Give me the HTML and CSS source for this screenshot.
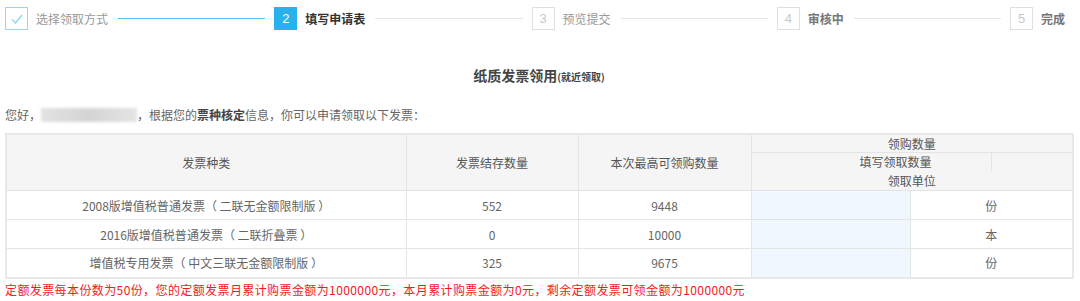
FILE: index.html
```html
<!DOCTYPE html>
<html lang="zh-CN">
<head>
    <meta charset="UTF-8">
    <meta name="viewport" content="width=device-width, initial-scale=1.0">
    <title>纸质发票领用</title>
    <link rel="stylesheet" href="styles.css">
</head>
<body>
    <div class="page">
        <div class="steps">
            <div class="step done">
                <span class="step-box">
                    <svg width="14" height="14" viewBox="0 0 14 14"><path d="M2 7.5 L5.5 11 L12 3" fill="none" stroke="#8fd0f2" stroke-width="1.3"/></svg>
                </span>
                <span class="step-text">选择领取方式</span>
            </div>
            <div class="step-line active"></div>
            <div class="step current">
                <span class="step-box">2</span>
                <span class="step-text">填写申请表</span>
            </div>
            <div class="step-line"></div>
            <div class="step">
                <span class="step-box">3</span>
                <span class="step-text">预览提交</span>
            </div>
            <div class="step-line"></div>
            <div class="step strong">
                <span class="step-box">4</span>
                <span class="step-text">审核中</span>
            </div>
            <div class="step-line"></div>
            <div class="step strong">
                <span class="step-box">5</span>
                <span class="step-text">完成</span>
            </div>
        </div>

        <h3 class="title">纸质发票领用<small>(就近领取)</small></h3>

        <p class="greeting">您好，<span class="masked"></span>，根据您的<b>票种核定</b>信息，你可以申请领取以下发票：</p>

        <table class="invoice-table">
            <colgroup>
                <col class="c1"><col class="c2"><col class="c3"><col class="c4"><col class="c5">
            </colgroup>
            <thead>
                <tr>
                    <th rowspan="2">发票种类</th>
                    <th rowspan="2">发票结存数量</th>
                    <th rowspan="2">本次最高可领购数量</th>
                    <th colspan="2" class="group">领购数量</th>
                </tr>
                <tr>
                    <th colspan="2" class="sub">
                        <div class="sub-row">
                            <span class="sub-fill">填写领取数量</span>
                            <span class="sub-empty"></span>
                        </div>
                        <div class="sub-unit">领取单位</div>
                    </th>
                </tr>
            </thead>
            <tbody>
                <tr>
                    <td>2008版增值税普通发票（ 二联无金额限制版 ）</td>
                    <td>552</td>
                    <td>9448</td>
                    <td class="input-cell"></td>
                    <td>份</td>
                </tr>
                <tr>
                    <td>2016版增值税普通发票（ 二联折叠票 ）</td>
                    <td>0</td>
                    <td>10000</td>
                    <td class="input-cell"></td>
                    <td>本</td>
                </tr>
                <tr>
                    <td>增值税专用发票（ 中文三联无金额限制版 ）</td>
                    <td>325</td>
                    <td>9675</td>
                    <td class="input-cell"></td>
                    <td>份</td>
                </tr>
            </tbody>
        </table>

        <p class="notice">定额发票每本份数为50份，您的定额发票月累计购票金额为1000000元，本月累计购票金额为0元，剩余定额发票可领金额为1000000元</p>
    </div>
</body>
</html>
```

FILE: styles.css
```css
* {
    box-sizing: border-box;
}

body {
    margin: 0;
    background-color: #fff;
    font-family: "Noto Sans CJK SC", "Liberation Sans", sans-serif;
    font-size: 12px;
    color: #666;
}

.page {
    width: 1073px;
    padding-left: 5px;
}

/* steps */
.steps {
    display: flex;
    align-items: center;
    height: 36px;
    padding-top: 1px;
    padding-right: 8px;
}

.step {
    display: flex;
    align-items: center;
}

.step-box {
    width: 23px;
    height: 23px;
    display: flex;
    align-items: center;
    justify-content: center;
    border: 1px solid #e0e0e0;
    color: #c8c8c8;
    font-family: "Liberation Sans", sans-serif;
    font-size: 13px;
}

.step-text {
    margin-left: 8px;
    color: #999;
    font-size: 12px;
}

.step.done .step-box {
    border-color: #9ad5f4;
}

.step.current .step-box {
    background-color: #29b1eb;
    border-color: #29b1eb;
    color: #fff;
}

.step.current .step-text {
    color: #333;
    font-weight: bold;
}

.step.strong .step-text {
    color: #777;
    font-weight: bold;
}

.step-line {
    flex: 1;
    height: 1px;
    margin: 0 9px 0 10px;
    background-color: #e6e6e6;
}

.step-line.active {
    background-color: #5bc3f1;
}

/* title */
.title {
    margin: 29px 0 0;
    text-align: center;
    font-size: 14px;
    font-weight: bold;
    color: #444;
    line-height: 20px;
}

.title small {
    font-size: 10px;
}

.greeting {
    margin: 18px 0 0;
    line-height: 20px;
    color: #666;
}

.greeting b {
    color: #444;
}

.masked {
    display: inline-block;
    width: 96px;
    height: 14px;
    vertical-align: -2px;
    background: linear-gradient(90deg, #e2e2e2, #d4d4d4 50%, #e4e4e4);
    filter: blur(1.5px);
}

/* table */
.invoice-table {
    margin-top: 8px;
    width: 1067px;
    table-layout: fixed;
    border-collapse: collapse;
    border: 2px solid #e8e8e8;
}

.c1 { width: 400px; }
.c2 { width: 172px; }
.c3 { width: 173px; }
.c4 { width: 159px; }
.c5 { width: 163px; }

th, td {
    border: 1px solid #e4e4e4;
    text-align: center;
    font-weight: normal;
    padding: 0;
}

th {
    background-color: #f5f5f5;
    color: #555;
}

th.group {
    height: 18px;
    line-height: 17px;
}

.sub-row {
    display: flex;
    height: 18px;
    line-height: 18px;
}

.sub-fill {
    width: 239px;
    text-align: left;
    padding-left: 108px;
}

.sub-empty {
    flex: 1;
    border-left: 1px solid #e4e4e4;
}

.sub-unit {
    height: 19px;
    line-height: 19px;
}

td {
    height: 29px;
    color: #666;
}

td.input-cell {
    background-color: #f0f7fe;
}

.notice {
    margin: 1px 0 0;
    line-height: 20px;
    color: #f21a1a;
    letter-spacing: 0.4px;
}
```
